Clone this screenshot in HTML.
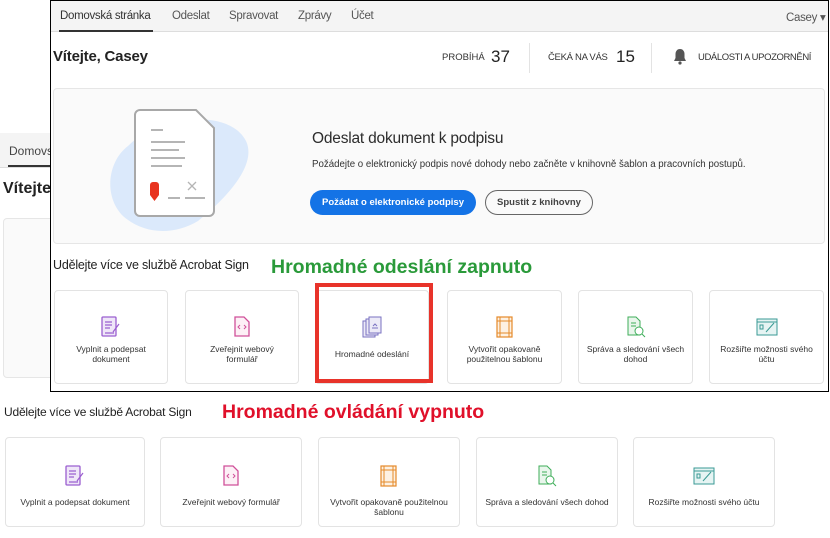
<!DOCTYPE html>
<html><head><meta charset="utf-8"><style>
*{box-sizing:border-box;margin:0;padding:0}
body{width:830px;height:538px;overflow:hidden;background:#fff;font-family:"Liberation Sans",sans-serif;color:#2c2c2c;position:relative}
.abs{position:absolute}
.card{position:absolute;background:#fff;border:1px solid #e3e3e3;border-radius:4px;text-align:center;font-size:8.5px;color:#333;line-height:10px}
.card svg{display:block;margin:0 auto}
.nav a{position:absolute;top:9px;font-size:11.5px;color:#555;letter-spacing:-0.3px}
.btn{display:flex;align-items:center;justify-content:center}
</style></head><body>
<!-- background screenshot -->
<div class="abs" style="left:0;top:133px;width:60px;height:35px;background:#f4f4f4;border-bottom:1px solid #ddd"></div>
<div class="abs" style="left:9px;top:144px;font-size:12px;color:#444">Domovská</div>
<div class="abs" style="left:8px;top:165px;width:45px;height:2px;background:#333"></div>
<div class="abs" style="left:3px;top:180px;font-size:16px;font-weight:bold;color:#222">Vítejte,</div>
<div class="abs" style="left:3px;top:218px;width:60px;height:160px;border:1px solid #e6e6e6;border-radius:4px;background:#fafafa"></div>

<!-- top window -->
<div class="abs" style="left:50px;top:0;width:779px;height:392px;border:1.5px solid #000;background:#fff;overflow:hidden">
 <div class="nav abs" style="left:0;top:0;width:780px;height:31px;background:#f4f4f4;border-bottom:1px solid #ddd">
  <a style="left:9px;color:#333">Domovská stránka</a>
  <div class="abs" style="left:8px;top:29px;width:94px;height:2px;background:#333"></div>
  <a style="left:121px">Odeslat</a><a style="left:178px">Spravovat</a><a style="left:247px">Zprávy</a><a style="left:300px">Účet</a>
  <a style="left:735px">Casey ▾</a>
 </div>
 <div class="abs" style="left:2px;top:47px;font-size:15px;font-weight:bold;color:#222;letter-spacing:-0.2px">Vítejte, Casey</div>
 <div class="abs" style="left:391px;top:51px;font-size:9.5px;color:#333">PROBÍHÁ</div>
 <div class="abs" style="left:440px;top:46px;font-size:17px;color:#222">37</div>
 <div class="abs" style="left:478px;top:42px;width:1px;height:30px;background:#e3e3e3"></div>
 <div class="abs" style="left:497px;top:51px;font-size:9.5px;color:#333;letter-spacing:-0.3px">ČEKÁ NA VÁS</div>
 <div class="abs" style="left:565px;top:46px;font-size:17px;color:#222">15</div>
 <div class="abs" style="left:600px;top:42px;width:1px;height:30px;background:#e3e3e3"></div>
 <svg class="abs" style="left:622px;top:47px" width="14" height="17" viewBox="0 0 14 17"><path d="M7 1c-3 0-4.5 2.5-4.5 5v4L1 13h12l-1.5-3V6C11.5 3.5 10 1 7 1z" fill="#555"/><circle cx="7" cy="15" r="1.6" fill="#555"/></svg>
 <div class="abs" style="left:647px;top:51px;font-size:9.5px;color:#333;letter-spacing:-0.4px">UDÁLOSTI A UPOZORNĚNÍ</div>

 <div class="abs" style="left:2px;top:87px;width:772px;height:156px;background:#fafafa;border:1px solid #e6e6e6;border-radius:4px"></div>
 <svg class="abs" style="left:52px;top:105px" width="150" height="128" viewBox="0 0 150 128">
  <path d="M60 18C90 10 130 10 143 35 155 60 120 95 95 115 70 130 40 128 20 110 0 90 5 55 25 40 38 28 45 22 60 18z" fill="#dbe9fb"/>
  <path d="M37 4h56l18 18v83a5 5 0 0 1-5 5H37a5 5 0 0 1-5-5V9a5 5 0 0 1 5-5z" fill="#fff" stroke="#a8a8a8" stroke-width="2"/>
  <g stroke="#b5b5b5" stroke-width="2"><path d="M48 24h12M48 36h34M48 44h28M48 52h34M48 60h31M65 92h12M82 92h20"/><path d="M85 76l8 8M93 76l-8 8" stroke-width="1.3"/></g>
  <path d="M47 79a3 3 0 0 1 3-3h3a3 3 0 0 1 3 3v10l-4.5 6-4.5-6z" fill="#e8331f"/>
 </svg>
 <div class="abs" style="left:261px;top:129px;font-size:15.5px;color:#2c2c2c;letter-spacing:-0.2px">Odeslat dokument k podpisu</div>
 <div class="abs" style="left:261px;top:158px;font-size:9.7px;color:#333">Požádejte o elektronický podpis nové dohody nebo začněte v knihovně šablon a pracovních postupů.</div>
 <div class="abs btn" style="left:259px;top:189px;width:166px;height:25px;border-radius:13px;background:#1473e6;color:#fff;font-size:9.5px;font-weight:bold">Požádat o elektronické podpisy</div>
 <div class="abs btn" style="left:434px;top:189px;width:108px;height:25px;border-radius:13px;border:1.5px solid #666;color:#444;font-size:9.5px;font-weight:bold">Spustit z knihovny</div>
 <div class="abs" style="left:2px;top:257px;font-size:12.5px;color:#222;letter-spacing:-0.2px">Udělejte více ve službě Acrobat Sign</div>
 <div class="abs" style="left:220px;top:255px;font-size:19.5px;font-weight:bold;color:#2a9a3a">Hromadné odeslání zapnuto</div>
</div>

<!-- top cards -->
<div class="card" style="left:54px;top:290px;width:114px;height:94px"><svg style="margin-top:24px" width="22" height="24" viewBox="0 0 22 24"><rect x="2" y="2" width="14" height="19" rx="1" fill="#efe6f8" stroke="#9b5fd0" stroke-width="1.3"/><path d="M5 7h7M5 10h7M5 13h5M5 18h9M13 17l6-8" stroke="#9b5fd0" stroke-width="1.2" fill="none"/></svg><div style="margin-top:5px">Vyplnit a podepsat<br>dokument</div></div>
<div class="card" style="left:185px;top:290px;width:114px;height:94px"><svg style="margin-top:24px" width="22" height="24" viewBox="0 0 22 24"><path d="M4 2h9l5 5v14H4z" fill="#fdf0f6" stroke="#d0509a" stroke-width="1.3"/><path d="M9 10l-2 2 2 2M13 10l2 2-2 2" stroke="#d0509a" stroke-width="1" fill="none"/></svg><div style="margin-top:5px">Zveřejnit webový<br>formulář</div></div>
<div class="card" style="left:315px;top:290px;width:114px;height:94px"><svg style="margin-top:24px" width="22" height="24" viewBox="0 0 22 24"><rect x="2" y="6" width="12" height="16" fill="#eceaf7" stroke="#7a72c2"/><rect x="5" y="4" width="12" height="16" fill="#eceaf7" stroke="#7a72c2"/><rect x="8" y="2" width="12" height="16" fill="#eceaf7" stroke="#7a72c2"/><path d="M11 13h6M12 11l2-2 2 2" stroke="#7a72c2" fill="none"/></svg><div style="margin-top:10px">Hromadné odeslání</div></div>
<div class="card" style="left:447px;top:290px;width:115px;height:94px"><svg style="margin-top:24px" width="22" height="24" viewBox="0 0 22 24"><rect x="3" y="2" width="15" height="20" fill="#fdf1e3" stroke="#e58a2a" stroke-width="1.2"/><path d="M6 2v20M15 2v20M3 6h15M3 18h15" stroke="#e58a2a"/></svg><div style="margin-top:5px">Vytvořit opakovaně<br>použitelnou šablonu</div></div>
<div class="card" style="left:578px;top:290px;width:115px;height:94px"><svg style="margin-top:24px" width="22" height="24" viewBox="0 0 22 24"><path d="M3 2h8l4 4v14H3z" fill="#e9f6ec" stroke="#3fae5a"/><circle cx="14" cy="16" r="4" fill="#fff" stroke="#3fae5a"/><path d="M17 19l3 3M6 8h5M6 11h5" stroke="#3fae5a"/></svg><div style="margin-top:5px">Správa a sledování všech<br>dohod</div></div>
<div class="card" style="left:709px;top:290px;width:115px;height:94px"><svg style="margin-top:24px" width="24" height="24" viewBox="0 0 24 24"><rect x="2" y="4" width="20" height="16" fill="#e6f4f3" stroke="#3a9a94"/><path d="M2 7h20" stroke="#3a9a94"/><rect x="5" y="10" width="3" height="4" fill="none" stroke="#3a9a94"/><path d="M11 17l8-9" stroke="#3a9a94"/></svg><div style="margin-top:5px">Rozšiřte možnosti svého<br>účtu</div></div>
<div class="abs" style="left:315px;top:283px;width:118px;height:100px;border:4px solid #e8332a"></div>

<!-- bottom section -->
<div class="abs" style="left:4px;top:405px;font-size:12px;color:#222;letter-spacing:-0.2px">Udělejte více ve službě Acrobat Sign</div>
<div class="abs" style="left:222px;top:401px;font-size:19.5px;font-weight:bold;color:#e0102a">Hromadné ovládání vypnuto</div>
<div class="card" style="left:5px;top:437px;width:140px;height:90px"><svg style="margin-top:26px" width="22" height="24" viewBox="0 0 22 24"><rect x="2" y="2" width="14" height="19" rx="1" fill="#efe6f8" stroke="#9b5fd0" stroke-width="1.3"/><path d="M5 7h7M5 10h7M5 13h5M5 18h9M13 17l6-8" stroke="#9b5fd0" stroke-width="1.2" fill="none"/></svg><div style="margin-top:9px">Vyplnit a podepsat dokument</div></div>
<div class="card" style="left:160px;top:437px;width:142px;height:90px"><svg style="margin-top:26px" width="22" height="24" viewBox="0 0 22 24"><path d="M4 2h9l5 5v14H4z" fill="#fdf0f6" stroke="#d0509a" stroke-width="1.3"/><path d="M9 10l-2 2 2 2M13 10l2 2-2 2" stroke="#d0509a" stroke-width="1" fill="none"/></svg><div style="margin-top:9px">Zveřejnit webový formulář</div></div>
<div class="card" style="left:318px;top:437px;width:142px;height:90px"><svg style="margin-top:26px" width="22" height="24" viewBox="0 0 22 24"><rect x="3" y="2" width="15" height="20" fill="#fdf1e3" stroke="#e58a2a" stroke-width="1.2"/><path d="M6 2v20M15 2v20M3 6h15M3 18h15" stroke="#e58a2a"/></svg><div style="margin-top:9px">Vytvořit opakovaně použitelnou<br>šablonu</div></div>
<div class="card" style="left:476px;top:437px;width:142px;height:90px"><svg style="margin-top:26px" width="22" height="24" viewBox="0 0 22 24"><path d="M3 2h8l4 4v14H3z" fill="#e9f6ec" stroke="#3fae5a"/><circle cx="14" cy="16" r="4" fill="#fff" stroke="#3fae5a"/><path d="M17 19l3 3M6 8h5M6 11h5" stroke="#3fae5a"/></svg><div style="margin-top:9px">Správa a sledování všech dohod</div></div>
<div class="card" style="left:633px;top:437px;width:142px;height:90px"><svg style="margin-top:26px" width="24" height="24" viewBox="0 0 24 24"><rect x="2" y="4" width="20" height="16" fill="#e6f4f3" stroke="#3a9a94"/><path d="M2 7h20" stroke="#3a9a94"/><rect x="5" y="10" width="3" height="4" fill="none" stroke="#3a9a94"/><path d="M11 17l8-9" stroke="#3a9a94"/></svg><div style="margin-top:9px">Rozšiřte možnosti svého účtu</div></div>
</body></html>
